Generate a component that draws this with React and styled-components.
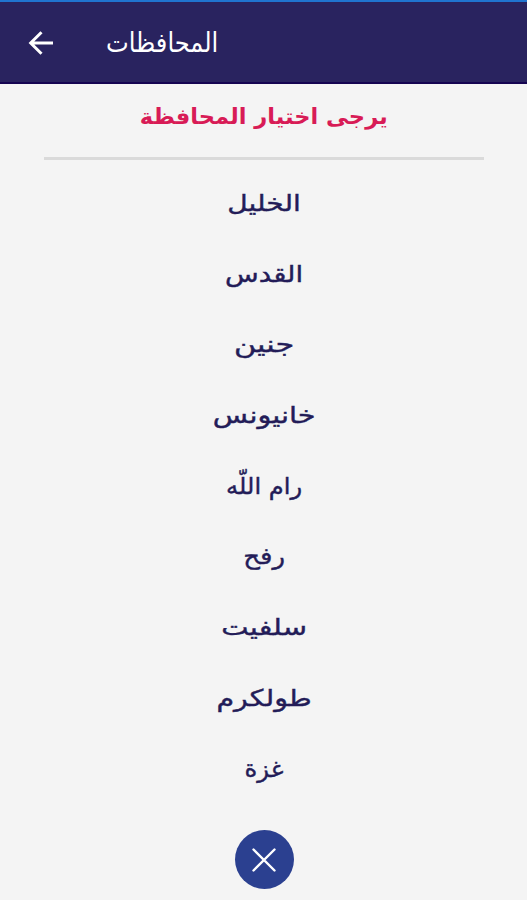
import React from 'react';
import styled, { createGlobalStyle } from 'styled-components';

const cities = [
    { name: 'الخليل', stretch: 1.22 },
    { name: 'القدس', stretch: 1.2 },
    { name: 'جنين', stretch: 1.32 },
    { name: 'خانيونس', stretch: 1.25 },
    { name: 'رام اللّه', stretch: 1.05 },
    { name: 'رفح', stretch: 1.13 },
    { name: 'سلفيت', stretch: 1.26 },
    { name: 'طولكرم', stretch: 1.24 },
    { name: 'غزة', stretch: 1.06 },
];

function App() {
    return (
        <Screen>
            <GlobalStyle />
            <Header>
                <BackButton aria-label="رجوع">
                    <svg width="26" height="24" viewBox="0 0 26 24" fill="none" stroke="#fff" strokeWidth="3">
                        <path d="M25 12H3M13.5 1.2L2.7 12l10.8 10.8" />
                    </svg>
                </BackButton>
                <Title>المحافظات</Title>
            </Header>
            <Prompt>يرجى اختيار المحافظة</Prompt>
            <Divider />
            <List>
                {cities.map((city) => (
                    <Item key={city.name} $stretch={city.stretch}>{city.name}</Item>
                ))}
            </List>
            <CloseButton aria-label="إغلاق">
                <svg width="24" height="24" viewBox="0 0 24 24" fill="none" stroke="#fff" strokeWidth="2.4" strokeLinecap="round">
                    <path d="M1.5 1.5l21 21M22.5 1.5l-21 21" />
                </svg>
            </CloseButton>
        </Screen>
    );
}

export default App;

const GlobalStyle = createGlobalStyle`
body{
    margin:0;
    background:#f4f4f4;
}
`

const Screen = styled.div`
width:527px;
height:900px;
display:flex;
flex-direction:column;
align-items:center;
overflow:hidden;
background:#f4f4f4;
font-family:'DejaVu Sans', sans-serif;
`

const Header = styled.header`
box-sizing:border-box;
width:100%;
height:84px;
flex:none;
display:flex;
align-items:center;
padding:2px 0 0 28px;
background:#29235f;
border-top:2px solid #2074d0;
border-bottom:2px solid #150451;
`

const BackButton = styled.button`
display:flex;
padding:0;
border:none;
background:none;
`

const Title = styled.h1`
margin:0 0 2px 52px;
font-size:25px;
font-weight:normal;
color:#fff;
transform:scale(0.965, 1.08);
transform-origin:left center;
`

const Prompt = styled.h2`
margin:0;
height:73px;
line-height:66px;
font-size:22px;
color:#d81b56;
direction:rtl;
transform:scaleX(1.026);
`

const Divider = styled.hr`
width:440px;
height:3px;
flex:none;
margin:0;
border:none;
background:#dadada;
`

const List = styled.ul`
list-style:none;
margin:0 0 0 2px;
padding:8px 0 0;
direction:rtl;
`

const Item = styled.li`
height:70.7px;
line-height:70.7px;
text-align:center;
font-size:23px;
color:#231c58;
-webkit-text-stroke:0.4px #231c58;
transform:scaleX(${(props) => props.$stretch});
`

const CloseButton = styled.button`
display:flex;
align-items:center;
justify-content:center;
width:59px;
height:59px;
flex:none;
margin:26px 0 0 1px;
padding:0;
border:none;
border-radius:50%;
background:#2b4090;
`
